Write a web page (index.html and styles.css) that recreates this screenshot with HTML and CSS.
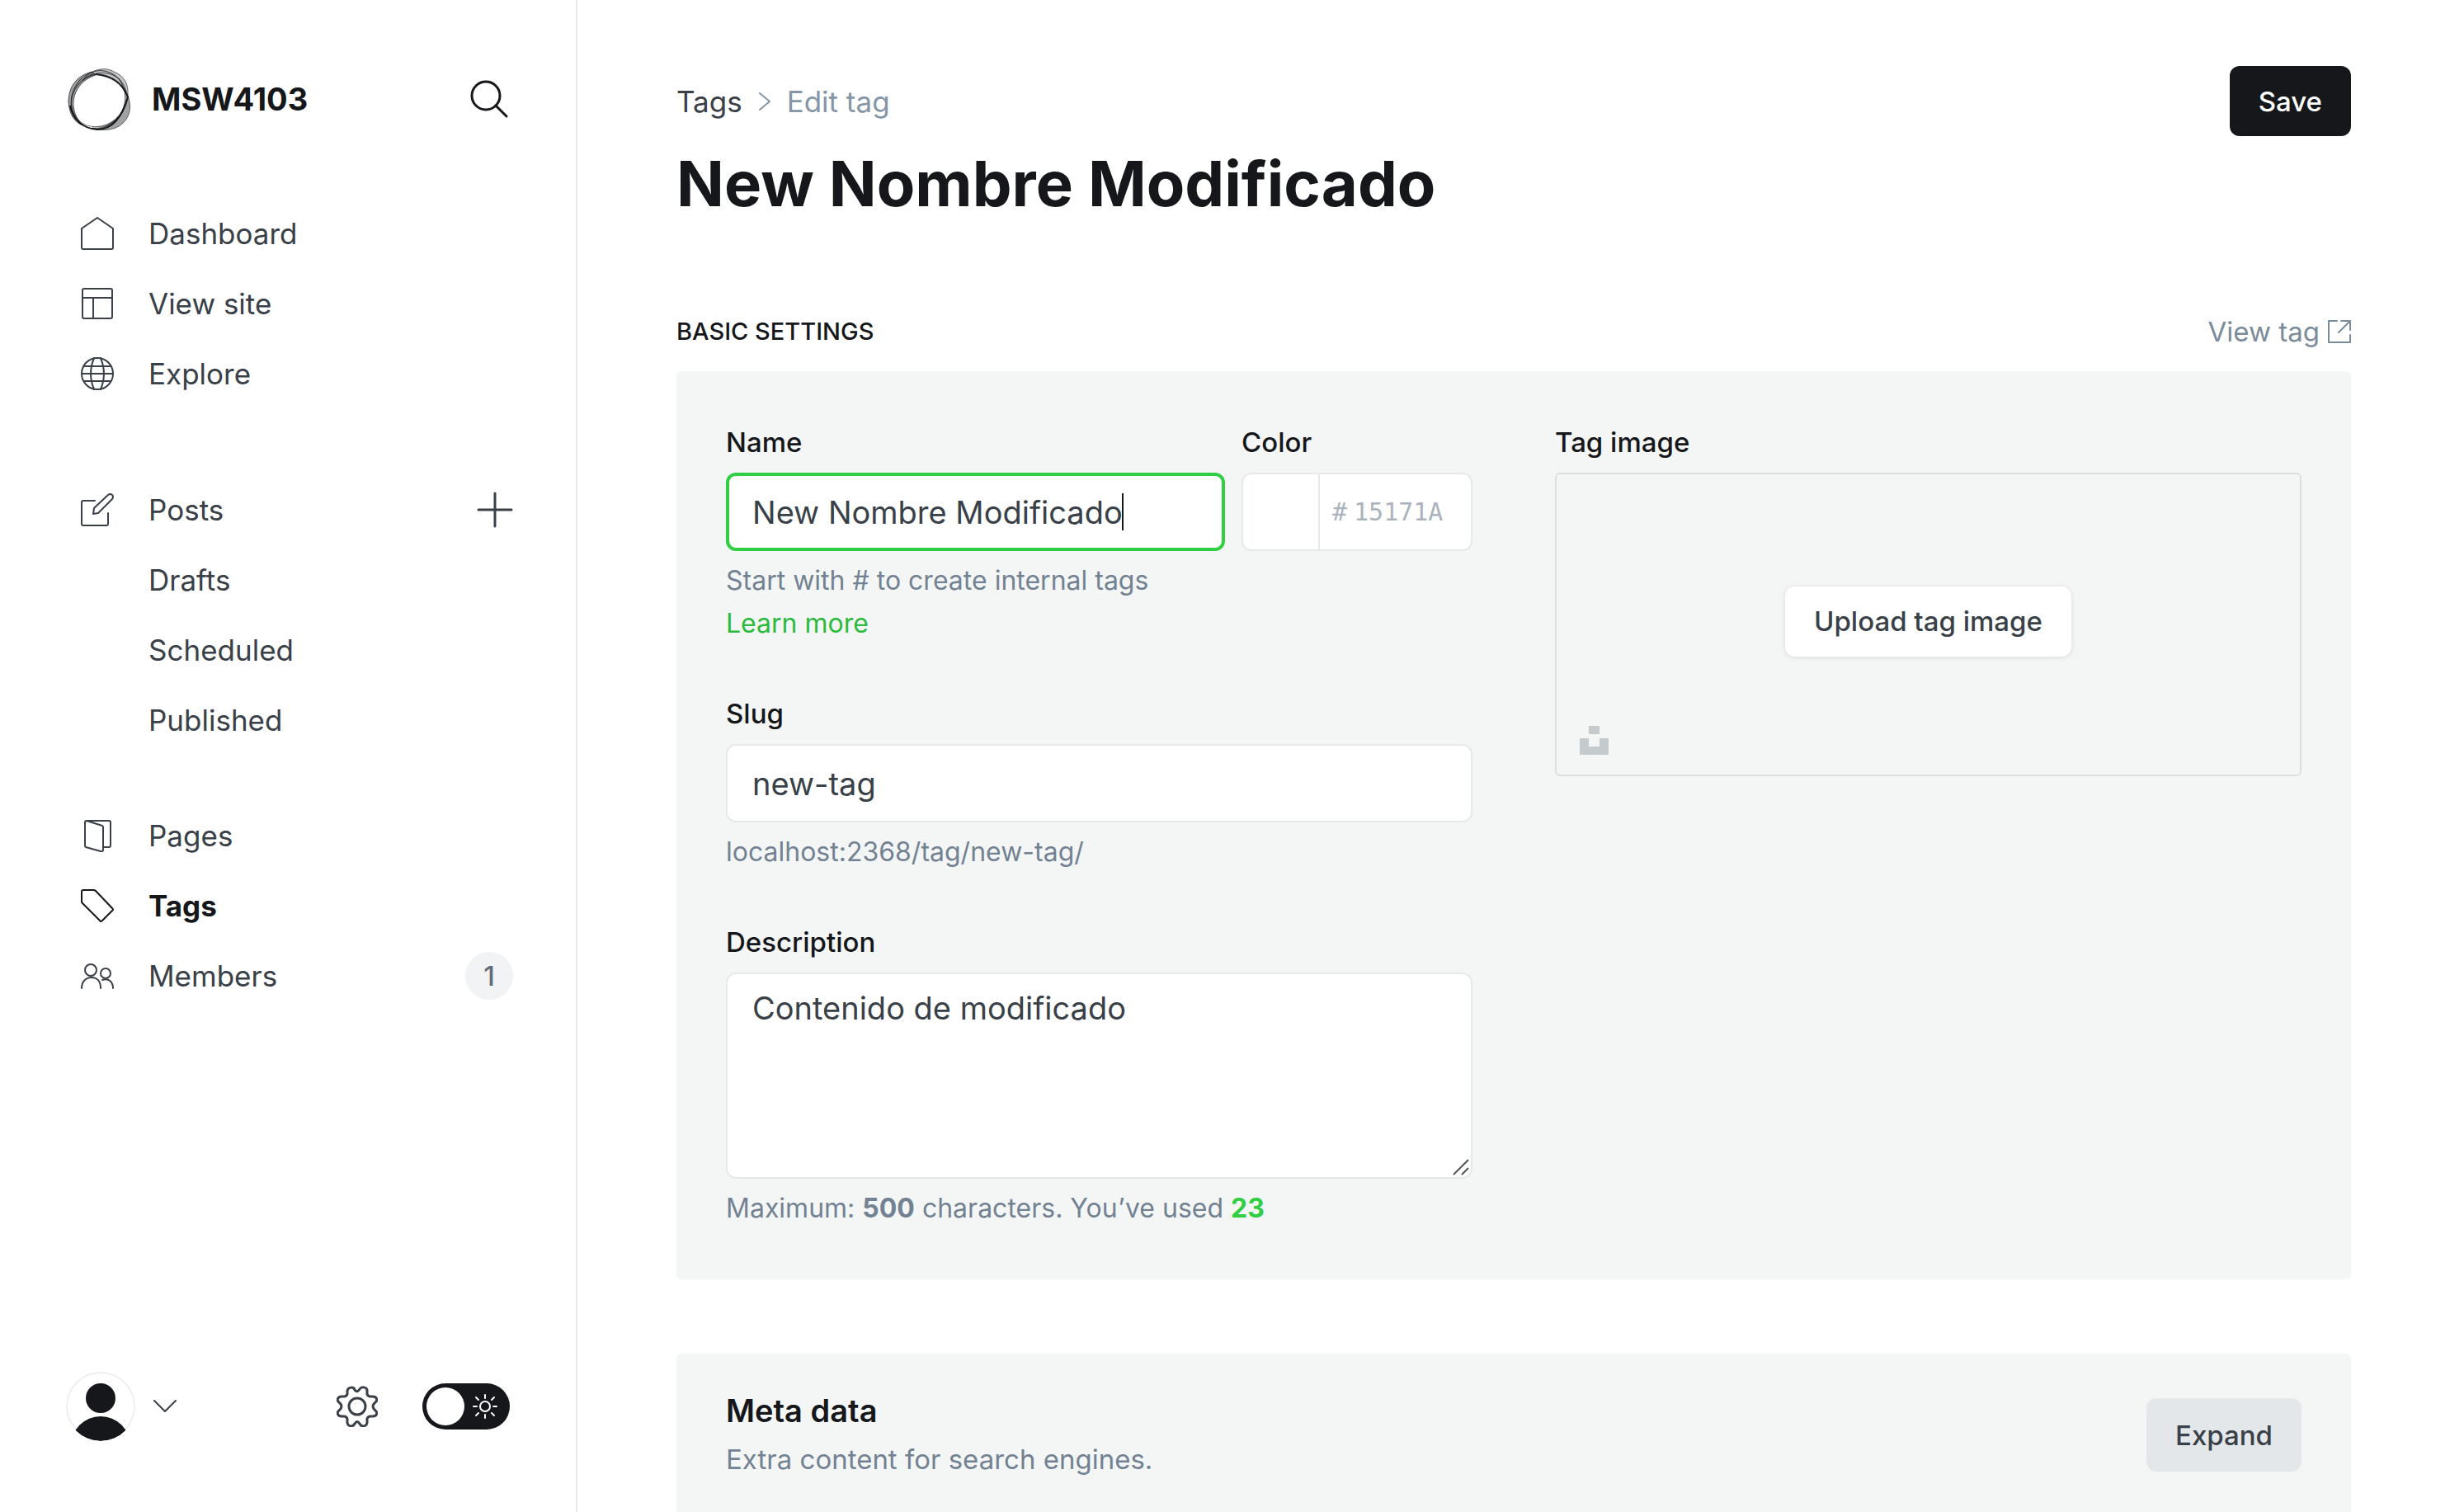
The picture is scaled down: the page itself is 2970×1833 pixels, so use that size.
FILE: index.html
```html
<!DOCTYPE html>
<html lang="en">
<head>
<meta charset="utf-8">
<title>Edit tag - MSW4103</title>
<link rel="stylesheet" href="styles.css">
</head>
<body>
<div class="app">
  <nav class="sidebar" aria-label="Main">
    <header class="site">
      <svg class="site-logo" viewBox="0 0 76 76" fill="none" stroke="#15171a" aria-hidden="true">
        <path d="M30 5C38 1 48 0 56 5C69 10 74 20 73 34C69 22 60 14 48 10C38 6 28 8 18 16C22 10 25 7 30 5Z" fill="#15171a" fill-opacity=".25" stroke-width="1" stroke-opacity=".6"/>
        <path d="M73 34C79 50 74 64 62 71C54 76 40 77 30 73C44 75 58 66 66 54C70 48 72 42 73 34Z" fill="#15171a" fill-opacity=".4" stroke-width="1" stroke-opacity=".6"/>
        <path d="M30 5C12 9 1 22 1 42C2 56 8 66 18 70C10 62 6 50 7 40C9 26 18 14 34 9Z" fill="#15171a" fill-opacity=".4" stroke-width="1" stroke-opacity=".7"/>
        <ellipse cx="37" cy="39" rx="32" ry="36" stroke-width="1" stroke-opacity=".8" transform="rotate(25 37 39)"/>
        <ellipse cx="38" cy="39" rx="35" ry="31" stroke-width="1" stroke-opacity=".7" transform="rotate(-40 38 39)"/>
        <path d="M3 46C6 62 18 74 36 75C54 75 66 60 73 36C68 22 56 10 34 8" stroke-width="2"/>
      </svg>
      <span class="site-name">MSW4103</span>
      <button class="icon-button" type="button" aria-label="Search">
        <svg class="icon-search" viewBox="0 0 46 46" fill="none" stroke="currentColor" stroke-width="3" stroke-linecap="round"><circle cx="19" cy="19" r="17"/><path d="M31 31l13 13"/></svg>
      </button>
    </header>

    <ul class="nav-list">
      <li><a class="nav-link" href="#dashboard"><svg class="nav-icon" viewBox="0 0 40 40"><path d="M20 1L39 14v23a2 2 0 0 1-2 2H3a2 2 0 0 1-2-2V14z"/></svg>Dashboard</a></li>
      <li><a class="nav-link" href="#site"><svg class="nav-icon" viewBox="0 0 40 40"><rect x="2" y="2" width="36" height="36" rx="2"/><path d="M2 13h36M15 13v25"/></svg>View site</a></li>
      <li><a class="nav-link" href="#explore"><svg class="nav-icon" viewBox="0 0 40 40"><circle cx="20" cy="20" r="19"/><path d="M1 20h38M4 11h32M4 29h32M16 1c-5 12-5 26 0 38M24 1c5 12 5 26 0 38"/></svg>Explore</a></li>
    </ul>

    <ul class="nav-list nav-list-posts">
      <li class="nav-row"><a class="nav-link" href="#posts"><svg class="nav-icon" viewBox="0 0 40 40"><path d="M17 9H3a2 2 0 0 0-2 2v26a2 2 0 0 0 2 2h28a2 2 0 0 0 2-2V24M15 25l1-7L33 2q3-2 5 0t0 5L21 24z"/></svg>Posts</a>
        <button class="icon-button" type="button" aria-label="New post"><svg class="icon-plus" viewBox="0 0 44 44" fill="none" stroke="#394047" stroke-width="3" stroke-linecap="round"><path d="M22 2v40M2 22h40"/></svg></button></li>
      <li><a class="nav-link nav-sub" href="#drafts">Drafts</a></li>
      <li><a class="nav-link nav-sub" href="#scheduled">Scheduled</a></li>
      <li><a class="nav-link nav-sub" href="#published">Published</a></li>
    </ul>

    <ul class="nav-list">
      <li><a class="nav-link" href="#pages"><svg class="nav-icon" viewBox="0 0 40 40"><path d="M28 34h6a2 2 0 0 0 2-2V4a2 2 0 0 0-2-2H7M5 3a2 2 0 0 1 2-1l19 6a2 2 0 0 1 1 2v27a2 2 0 0 1-3 2L6 34a2 2 0 0 1-1-2z"/></svg>Pages</a></li>
      <li><a class="nav-link nav-active" href="#tags" aria-current="page"><svg class="nav-icon" viewBox="0 0 40 40"><path d="M3 1h12q2 0 3 1l20 21q2 2 0 3L26 38q-2 2-3 0L2 17q-1-1-1-2V3a2 2 0 0 1 2-2z"/></svg>Tags</a></li>
      <li class="nav-row"><a class="nav-link" href="#members"><svg class="nav-icon" viewBox="0 0 40 40"><circle cx="12" cy="13" r="7"/><circle cx="30" cy="17" r="6"/><path d="M1 35c0-8 5-13 12-13s11 5 11 13M26 25c8-3 13 3 13 10"/></svg>Members</a>
        <span class="badge">1</span></li>
    </ul>

    <footer class="user-bar">
      <button class="user-menu" type="button" aria-label="User menu">
        <svg class="avatar" viewBox="0 0 84 84"><defs><clipPath id="avatar-clip"><circle cx="42" cy="42" r="42"/></clipPath></defs><circle cx="42" cy="42" r="41" fill="#fff" stroke="#ebeef0" stroke-width="2"/><g clip-path="url(#avatar-clip)" fill="#15171a"><circle cx="42" cy="32" r="18"/><circle cx="42" cy="90" r="36"/></g></svg>
        <svg class="chevron" viewBox="0 0 28 16" fill="none" stroke="#394047" stroke-width="2" stroke-linecap="round" stroke-linejoin="round"><path d="M1 1l13 13L27 1"/></svg>
      </button>
      <button class="icon-button" type="button" aria-label="Settings">
        <svg class="icon-gear" viewBox="0 0 50 50" fill="none" stroke="#394047" stroke-width="3" stroke-linejoin="round"><circle cx="25" cy="25" r="10"/><path d="M22 5C21 1 14 1 13 6L13 10Q12 13 9 13L6 13C1 13 0 18 3 20Q9 25 3 30C0 32 1 37 6 37L9 37Q12 37 13 40L13 45C14 50 20 50 22 46Q25 41 28 46C30 50 36 50 37 45L37 40Q38 37 41 37L44 37C49 37 50 32 47 30Q41 25 47 20C50 18 49 13 44 13L41 13Q38 13 37 10L37 5C36 1 30 1 28 4Q25 9 22 5Z"/></svg>
      </button>
      <label class="theme-toggle">
        <input class="theme-input" type="checkbox" aria-label="Night mode">
        <svg class="icon-sun" viewBox="0 0 32 32" fill="none" stroke="#fff" stroke-width="2" stroke-linecap="round"><circle cx="16" cy="16" r="6"/><path d="M16 2v4M16 26v4M2 16h4M26 16h4M5 5l3 3M24 24l3 3M5 27l3-3M24 8l3-3"/></svg>
      </label>
    </footer>
  </nav>

  <main class="main">
    <header class="page-head">
      <div>
        <nav class="crumbs" aria-label="Breadcrumb">
          <a class="crumb-link" href="#tags">Tags</a>
          <svg class="crumb-arrow" viewBox="0 0 14 22" fill="none" stroke="currentColor" stroke-width="2" stroke-linecap="round" stroke-linejoin="round"><path d="M1 1l12 10L1 21"/></svg>
          <span>Edit tag</span>
        </nav>
        <h1 class="title">New Nombre Modificado</h1>
      </div>
      <button class="button button-dark" type="button">Save</button>
    </header>

    <section>
      <div class="section-head">
        <h2 class="section-title">Basic settings</h2>
        <a class="view-link" href="#view">View tag
          <svg class="icon-external" viewBox="0 0 28 28" fill="none" stroke="currentColor" stroke-width="2" stroke-linejoin="round" stroke-linecap="round"><path d="M11 1H1v26h26V18M16 1h11v11M27 1L13 15"/></svg>
        </a>
      </div>
      <form class="card settings">
        <div class="fields">
          <div class="name-row">
            <div class="field">
              <label class="label" for="name">Name</label>
              <div class="input-wrap">
                <input class="input" id="name" type="text" value="New Nombre Modificado">
                <span class="caret" aria-hidden="true"></span>
              </div>
            </div>
            <div class="field">
              <label class="label" for="color">Color</label>
              <div class="color-box">
                <span class="swatch"></span>
                <span class="hash">#</span>
                <input class="color-input" id="color" type="text" placeholder="15171A">
              </div>
            </div>
          </div>
          <p class="hint">Start with # to create internal tags<br><a class="hint-link" href="#learn">Learn more</a></p>
          <div class="field field-next">
            <label class="label" for="slug">Slug</label>
            <input class="input" id="slug" type="text" value="new-tag">
          </div>
          <p class="hint">localhost:2368/tag/new-tag/</p>
          <div class="field field-next">
            <label class="label" for="description">Description</label>
            <div class="input-wrap">
              <textarea class="input area" id="description">Contenido de modificado</textarea>
              <svg class="grip" viewBox="0 0 20 20" stroke="#555" stroke-width="2" aria-hidden="true"><path d="M1 19L19 1M11 19l8-8"/></svg>
            </div>
          </div>
          <p class="hint">Maximum: <b>500</b> characters. You’ve used <b class="used">23</b></p>
        </div>
        <div class="field image-field">
          <span class="label" id="image-label">Tag image</span>
          <div class="uploader">
            <button class="button button-white" type="button" aria-describedby="image-label">Upload tag image</button>
            <button class="unsplash" type="button" aria-label="Unsplash"><svg class="icon-unsplash" viewBox="0 0 35 35" fill="#c5cacd"><path d="M11 0h13v10H11zM0 15h11v10h13V15h11v20H0z"/></svg></button>
          </div>
        </div>
      </form>
    </section>

    <section class="card meta">
      <div>
        <h2 class="meta-title">Meta data</h2>
        <p class="meta-text">Extra content for search engines.</p>
      </div>
      <button class="button button-grey" type="button">Expand</button>
    </section>
  </main>
</div>
<script src="page.js"></script>
</body>
</html>
```
FILE: styles.css
```css
* { box-sizing: border-box; }

body {
  margin: 0;
  background: #fff;
  color: #15171a;
  font-family: Inter, "Liberation Sans", sans-serif;
  font-size: 35px;
  line-height: 52px;
}

h1, h2, p, ul { margin: 0; padding: 0; }
ul { list-style: none; }
a { color: inherit; text-decoration: none; }
button, input, textarea { font: inherit; color: inherit; }
button { border: 0; padding: 0; background: none; cursor: pointer; }
svg { display: block; flex: none; }

.app { display: flex; height: 100vh; overflow: hidden; }

/* Sidebar */
.sidebar {
  flex: none;
  display: flex;
  flex-direction: column;
  width: 700px;
  padding: 80px 76px 86px 80px;
  border-right: 2px solid #e6e8ea;
}
.site { display: flex; align-items: center; height: 80px; margin-bottom: 80px; padding: 0 6px 0 2px; }
.site-logo { width: 76px; height: 76px; }
.site-name { flex: 1; margin-left: 26px; font-size: 38px; font-weight: 700; }
.icon-button { display: block; }
.icon-search { width: 46px; height: 46px; }
.nav-list { margin-bottom: 80px; }
.nav-list-posts { margin-bottom: 55px; }
.nav-row { display: flex; align-items: center; justify-content: space-between; }
.nav-link { display: flex; align-items: center; gap: 42px; height: 85px; padding-left: 18px; color: #394047; }
.nav-icon { width: 40px; height: 40px; fill: none; stroke: currentColor; stroke-width: 2; stroke-linejoin: round; stroke-linecap: round; }
.nav-sub { padding-left: 100px; }
.nav-active { color: #15171a; font-weight: 700; }
.icon-plus { width: 44px; height: 44px; }
.badge { display: grid; place-items: center; width: 58px; height: 58px; border-radius: 50%; background: #f1f3f4; color: #626d79; font-size: 33px; font-weight: 500; }
.user-bar { display: flex; align-items: center; margin-top: auto; padding-right: 4px; }
.user-menu { display: flex; align-items: center; gap: 22px; margin-right: auto; }
.avatar { width: 84px; height: 84px; border-radius: 50%; }
.chevron { width: 28px; height: 16px; }
.icon-gear { width: 50px; height: 50px; }
.theme-toggle { display: grid; width: 106px; height: 56px; margin-left: 54px; align-items: center; }
.theme-input {
  grid-area: 1 / 1;
  appearance: none;
  width: 106px;
  height: 56px;
  margin: 0;
  padding: 5px;
  border-radius: 28px;
  background: #15171a;
}
.theme-input::before { content: ""; display: block; width: 46px; height: 46px; border-radius: 50%; background: #fff; }
.icon-sun { grid-area: 1 / 1; justify-self: end; width: 32px; height: 32px; margin-right: 14px; }

/* Main column */
.main { flex: 1; min-width: 0; padding: 80px 120px 0; }
.page-head { display: flex; justify-content: space-between; align-items: flex-start; }
.crumbs { display: flex; align-items: center; gap: 20px; height: 85px; color: #8496a7; }
.crumb-link { color: #394047; }
.crumb-arrow { width: 14px; height: 22px; }
.title { font-size: 76px; line-height: 114px; font-weight: 700; }
.button { height: 85px; padding: 0 35px; border-radius: 12px; font-size: 33px; font-weight: 500; }
.button-dark { background: #15171a; color: #fff; }
.button-white { background: #fff; color: #394047; box-shadow: 0 1px 6px rgba(0, 0, 0, .12); }
.button-grey { height: 89px; background: #e3e7ea; color: #394047; }
.section-head { display: flex; justify-content: space-between; align-items: center; height: 96px; margin-top: 75px; }
.section-title { font-size: 29px; font-weight: 500; text-transform: uppercase; }
.view-link { display: flex; align-items: center; gap: 10px; color: #7c8b9a; font-size: 33px; }
.icon-external { width: 28px; height: 28px; }
.card { border-radius: 6px; background: #f4f6f6; }

/* Settings form */
.settings { display: grid; grid-template-columns: 1fr 1fr; gap: 100px; padding: 60px; }
.name-row { display: grid; grid-template-columns: 1fr 280px; gap: 20px; }
.field { display: flex; flex-direction: column; gap: 11px; }
.field-next { margin-top: 57px; }
.label { font-size: 33px; font-weight: 500; }
.input-wrap { position: relative; }
.input {
  display: block;
  width: 100%;
  height: 95px;
  padding: 0 30px;
  border: 2px solid #e6e9e9;
  border-radius: 12px;
  background: #fff;
  color: #394047;
  font-size: 38px;
}
.input:focus { outline: 0; border: 4px solid #30cf43; padding: 0 28px; caret-color: transparent; }
.caret { position: absolute; left: 480px; top: 25px; width: 2px; height: 45px; background: #15171a; }
.color-box { display: flex; align-items: center; height: 95px; border: 2px solid #e6e9e9; border-radius: 12px; background: #fff; color: #abb4be; font-family: "DejaVu Sans Mono", monospace; font-size: 30px; }
.swatch { align-self: stretch; width: 93px; border-right: 2px solid #e6e9e9; }
.hash { margin: 0 8px 0 15px; }
.color-input { flex: 1; min-width: 0; padding: 0; border: 0; background: none; }
.color-input::placeholder { color: #abb4be; opacity: 1; }
.hint { margin-top: 10px; color: #738292; font-size: 32px; }
.hint-link { color: #2bba3c; }
.used { color: #30cf43; }
.area { height: 250px; padding-top: 15px; resize: none; }
.grip { position: absolute; right: 4px; bottom: 4px; width: 20px; height: 20px; }
.uploader { position: relative; display: grid; place-items: center; height: 368px; padding-bottom: 8px; border: 2px solid #dcdfe0; border-radius: 6px; }
.unsplash { position: absolute; left: 28px; bottom: 24px; }
.icon-unsplash { width: 35px; height: 35px; }

/* Collapsed section */
.meta { display: flex; justify-content: space-between; align-items: flex-start; margin-top: 90px; padding: 54px 60px 60px; }
.meta-title { margin-bottom: 18px; font-size: 38px; line-height: 30px; font-weight: 600; }
.meta-text { color: #738292; font-size: 33px; }
```
FILE: page.js
```js
const nameField = document.getElementById("name");
nameField.focus();
nameField.setSelectionRange(nameField.value.length, nameField.value.length);
```
